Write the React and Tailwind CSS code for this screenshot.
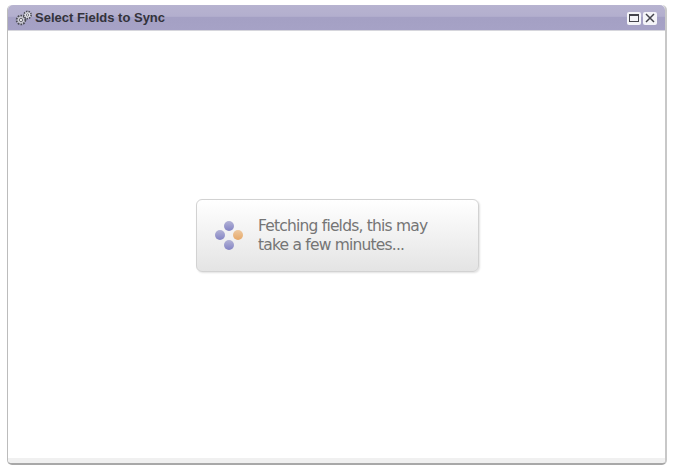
function GearIcon() {
  return (
    <svg width="18" height="16" viewBox="0 0 18 16" className="shrink-0">
      <circle cx="6" cy="10" r="4.4" fill="#c9c9d2" stroke="#4c4c56" strokeWidth="1.8" strokeDasharray="1.7 1.1" />
      <circle cx="6" cy="10" r="1.6" fill="#f4f4f6" stroke="#4c4c56" strokeWidth="0.8" />
      <circle cx="12.5" cy="5" r="3.6" fill="#e4e4ea" stroke="#4c4c56" strokeWidth="1.6" strokeDasharray="1.5 1" />
      <circle cx="12.5" cy="5" r="1.2" fill="#ffffff" stroke="#4c4c56" strokeWidth="0.7" />
    </svg>
  );
}

function LoadingDots() {
  return (
    <svg width="28" height="32" viewBox="0 0 28 32" className="shrink-0">
      <defs>
        <linearGradient id="purple" x1="0" y1="0" x2="0" y2="1">
          <stop offset="0" stopColor="#b3b3d6" />
          <stop offset="1" stopColor="#8383c4" />
        </linearGradient>
        <linearGradient id="orange" x1="0" y1="0" x2="0" y2="1">
          <stop offset="0" stopColor="#eec9a0" />
          <stop offset="1" stopColor="#e6a868" />
        </linearGradient>
      </defs>
      <circle cx="14" cy="6" r="5" fill="url(#purple)" />
      <circle cx="5" cy="15" r="5" fill="url(#purple)" />
      <circle cx="23" cy="15" r="5" fill="url(#orange)" />
      <circle cx="14" cy="25" r="5" fill="url(#purple)" />
    </svg>
  );
}

export default function App() {
  return (
    <div className="h-[474px] w-[674px] bg-white pl-[7px] pt-[5px]">
      <div className="flex h-[460px] w-[660px] flex-col rounded-t-[5px] rounded-b-[5px] border-r-2 border-b-2 border-l border-r-[#c8c8c8] border-b-[#a8a8a8] border-l-[#bcbcbc] bg-white">
        <div className="flex h-[25px] shrink-0 items-center rounded-t-[5px] bg-[linear-gradient(#b7b3d0_0%,#b3afce_45%,#a4a0c4_50%,#a6a2c6_100%)] pt-[1px] pr-[8px] pl-[7px]">
          <GearIcon />
          <span className="ml-[2px] font-['Liberation_Sans',sans-serif] text-[13px] font-bold text-[#33333b]">Select Fields to Sync</span>
          <div className="ml-auto flex items-center gap-[2px]">
            <div className="flex h-[13px] w-[14px] items-center justify-center rounded-[2px] bg-[#f4f4f8]">
              <div className="h-[8px] w-[10px] border border-t-2 border-[#44444c]" />
            </div>
            <div className="flex h-[13px] w-[14px] items-center justify-center rounded-[2px] bg-[#f4f4f8]">
              <svg width="10" height="10" viewBox="0 0 10 10">
                <path d="M1 1 L9 9 M9 1 L1 9" stroke="#44444c" strokeWidth="1.5" />
              </svg>
            </div>
          </div>
        </div>
        <div className="h-px shrink-0 bg-[#d6d6dc]" />
        <div className="flex flex-1 items-center justify-center pb-[18px] pl-[2px]">
          <div className="flex h-[73px] w-[283px] items-center gap-[15px] rounded-[6px] border border-[#d2d2d2] bg-[linear-gradient(#ffffff,#e4e4e4)] pl-[18px] shadow-[1px_1px_2px_rgba(0,0,0,0.12)]">
            <LoadingDots />
            <p className="font-['DejaVu_Sans',sans-serif] text-[15.5px] leading-[19px] tracking-[-0.8px] text-[#757575]">
              Fetching fields, this may
              <br />
              take a few minutes...
            </p>
          </div>
        </div>
        <div className="h-[5px] shrink-0 rounded-b-[4px] bg-[#f0f0f0]" />
      </div>
    </div>
  );
}
